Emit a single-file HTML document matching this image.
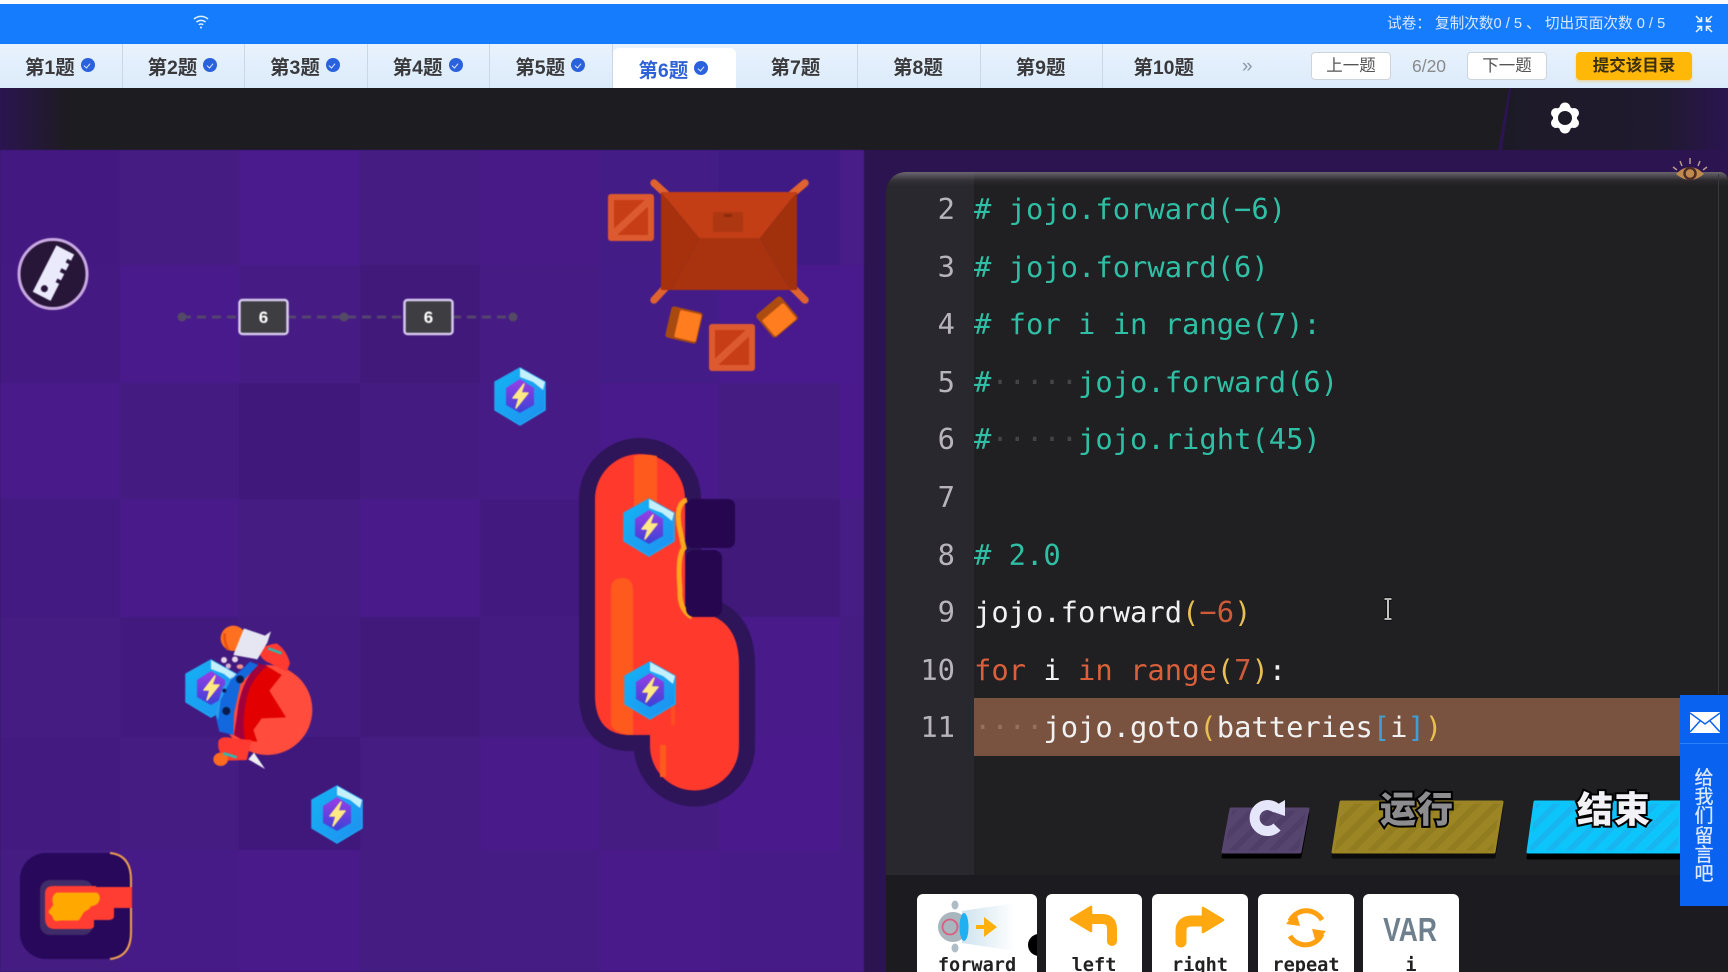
<!DOCTYPE html>
<html lang="zh">
<head>
<meta charset="utf-8">
<title>Code Exam</title>
<style>
html,body{margin:0;padding:0;background:#2b1450;width:1728px;height:972px;overflow:hidden;}
#wrap{position:relative;width:1728px;height:972px;overflow:hidden;font-family:"Liberation Sans","Noto Sans CJK SC",sans-serif;}
.abs{position:absolute;}
#top{left:0;top:0;width:1728px;height:44px;background:#157cfe;border-top:4px solid #f8fafc;box-sizing:border-box;}
#tabs{left:0;top:44px;width:1728px;height:44px;background:linear-gradient(#e8f2fc,#dcebfb);}
.tab{position:absolute;top:0;height:44px;width:122.6px;border-right:1px solid #c9d7e6;box-sizing:border-box;display:flex;align-items:center;justify-content:center;gap:6px;padding-bottom:2px;padding-right:2px;font-size:19.5px;font-weight:700;color:#3a3a3c;}
.tab i{display:block;width:14px;height:14px;border-radius:50%;background:#2a61dc;position:relative;}
.tab i:after{content:"";position:absolute;left:4.5px;top:3.5px;width:3px;height:5px;border:solid #dfe9ff;border-width:0 1.2px 1.2px 0;transform:rotate(40deg);}
.tab.on{top:4px;height:40px;left:613px;background:#fff;border:0;border-radius:6px 6px 0 0;color:#2f62d4;padding-bottom:0;}
.btn{position:absolute;top:8px;height:28px;width:80px;background:#fff;border:1px solid #cfd4da;border-radius:4px;box-sizing:border-box;font-size:16.5px;color:#555;text-align:center;line-height:26px;}
#dark{left:0;top:88px;width:1728px;height:62px;background:#1d1c20;}
#code{left:886px;top:172px;width:842px;height:703px;background:#201f22;border-radius:20px 8px 0 0;overflow:hidden;z-index:0;}
#code:before{content:"";position:absolute;left:0;top:0;right:0;height:14px;background:linear-gradient(rgba(120,114,124,.85),rgba(120,114,124,.12) 60%,rgba(120,114,124,0));z-index:2;}
#gut{left:0;top:0;width:88px;height:703px;background:#2a282f;}
.n{position:absolute;left:886px;width:69px;text-align:right;color:#b7b5bb;}
.l{position:absolute;left:974px;white-space:pre;color:#f1f1f1;}
.n,.l{font-family:"DejaVu Sans Mono","Liberation Mono",monospace;font-size:28.8px;line-height:57.6px;height:57.6px;}
.c{color:#2fbfa4}.k{color:#d9603a}.p{color:#e8c050}.b{color:#3fa0d8}.m{color:#cd5a38}
.d{color:#444348}.dh{color:#96705e}
#hl{left:974px;top:698px;width:706px;height:58px;background:#7a5240;}
#bot{left:886px;top:875px;width:842px;height:97px;background:#1c1b20;}
.card{position:absolute;top:894px;height:78px;background:#fff;border-radius:6px 6px 0 0;text-align:center;font-family:"DejaVu Sans Mono",monospace;font-weight:700;font-size:18.6px;color:#222;overflow:hidden;}
.card span{position:absolute;left:0;right:0;top:61px;line-height:22px;}
#side{left:1680px;top:695px;width:48px;height:211px;background:#0a62f0;}
#side b{position:absolute;left:0;width:48px;top:74px;text-align:center;font-weight:400;font-size:19px;line-height:19.2px;color:#dbe8ff;-webkit-text-stroke:.3px #dbe8ff;}
.bt{position:absolute;font-family:"Liberation Sans","Noto Sans CJK SC",sans-serif;font-weight:900;font-size:36px;line-height:40px;letter-spacing:1px;-webkit-text-stroke:4px #000;paint-order:stroke fill;text-align:center;}
</style>
</head>
<body>
<div id="wrap">
<div id="top" class="abs">
  <svg class="abs" style="left:192px;top:10px" width="18" height="16" viewBox="0 0 18 16" fill="none" stroke="#dff0ff" stroke-width="1.5"><path d="M2 5C6 1.500 12 1.500 16 5M4.500 8C7 5.800 11 5.800 13.500 8M6.800 10.800C8 9.800 10 9.800 11.200 10.800"/><circle cx="9" cy="13.500" r="1" fill="#dff0ff" stroke="none"/></svg>
  <div class="abs" style="left:1387px;top:9px;font-size:14.65px;line-height:22px;color:#dbe9ff;white-space:nowrap">试卷：&nbsp;复制次数0 / 5 、 切出页面次数 0 / 5</div>
  <svg class="abs" style="left:1695px;top:11px" width="18" height="18" viewBox="0 0 18 18" fill="none" stroke="#eaf3ff" stroke-width="1.500"><path d="M1 1L6.500 6.500M6.500 2V6.500H2M17 1L11.500 6.500M11.500 2V6.500H16M1 17L6.500 11.500M6.500 16V11.500H2M17 17L11.500 11.500M11.500 16V11.500H16"/></svg>
</div>
<div id="tabs" class="abs">
  <div class="tab" style="left:0">第1题<i></i></div>
  <div class="tab" style="left:122.600px">第2题<i></i></div>
  <div class="tab" style="left:245.200px">第3题<i></i></div>
  <div class="tab" style="left:367.800px">第4题<i></i></div>
  <div class="tab" style="left:490.400px">第5题<i></i></div>
  <div class="tab on">第6题<i></i></div>
  <div class="tab" style="left:735.600px">第7题</div>
  <div class="tab" style="left:858.200px">第8题</div>
  <div class="tab" style="left:980.800px">第9题</div>
  <div class="tab" style="left:1103.400px;border:0">第10题</div>
  <div class="abs" style="left:1242px;top:11px;font-size:19px;line-height:24px;color:#8d97a3">»</div>
  <div class="btn" style="left:1311px">上一题</div>
  <div class="abs" style="left:1400px;width:58px;top:8px;text-align:center;font-size:17.5px;line-height:28px;color:#8a8a8a">6/20</div>
  <div class="btn" style="left:1467px">下一题</div>
  <div class="btn" style="left:1576px;width:116px;background:#ffb808;border:0;line-height:28px;font-weight:700;color:#3a2f10;box-shadow:0 2px 2px #e8d9a8">提交该目录</div>
</div>
<div id="dark" class="abs"></div>

<svg class="abs" style="left:0;top:88px" width="1728" height="62" viewBox="0 88 1728 62">
  <defs><linearGradient id="gl" x1="0" x2="1"><stop offset="0" stop-color="#2b1450"/><stop offset="1" stop-color="#1d1c20"/></linearGradient>
  <linearGradient id="gr" x1="0" x2="1"><stop offset="0" stop-color="#1d1a28"/><stop offset=".7" stop-color="#1f1a2e"/><stop offset="1" stop-color="#2b1450"/></linearGradient></defs>
  <rect x="0" y="88" width="70" height="62" fill="url(#gl)"/>
  <polygon points="1511,88 1728,88 1728,150 1500,150" fill="url(#gr)"/>
  <polygon points="1509,88 1511,88 1502,150 1498,150" fill="#2b1450"/>
  <g fill="#fff">
    <circle cx="1565" cy="108" r="5.500"/><circle cx="1565" cy="128" r="5.500"/>
    <circle cx="1556" cy="113" r="5"/><circle cx="1574" cy="113" r="5"/>
    <circle cx="1556" cy="123" r="5"/><circle cx="1574" cy="123" r="5"/>
    <circle cx="1565" cy="118" r="12"/>
  </g>
  <circle cx="1565" cy="118" r="7" fill="#1d1a28"/>
</svg>

<!-- GAME -->
<svg class="abs" style="left:0;top:150px;filter:blur(.4px)" width="864" height="822" viewBox="0 150 864 822">
  <defs>
    <linearGradient id="hexin" x1="0" y1="0" x2="0" y2="1"><stop offset="0" stop-color="#9a3ee6"/><stop offset="1" stop-color="#3b42d6"/></linearGradient>
    <linearGradient id="hexo" x1="0" y1="0" x2="1" y2="1"><stop offset="0" stop-color="#14b4f4"/><stop offset="1" stop-color="#1f8ff0"/></linearGradient>
    <g id="bat">
      <polygon points="25,0 50,14 50,42 25,57 0,42 0,14" fill="url(#hexo)" stroke="#1fa8f4" stroke-width="1.500" stroke-linejoin="round"/>
      <polygon points="25,0 50,14 48,22 38,14 25,9" fill="#c4f0fb"/>
      <polygon points="25,11 39,20 39,37 25,45 11,37 11,20" fill="url(#hexin)"/>
      <polygon points="29,16 18,30 24,30 21,40 33,25 26,25" fill="#ffe984" stroke="#ffe984" stroke-width="1.500" stroke-linejoin="round"/>
    </g>
    <g id="crate">
      <rect width="46" height="47" rx="3" fill="#dd5a30"/>
      <rect x="6" y="6" width="34" height="35" fill="#c73d15"/>
      <path d="M3 42L43 5" stroke="#dd5a30" stroke-width="7"/>
    </g>
  </defs>
  <rect x="0" y="150" width="864" height="822" fill="#481a88"/>
  <g>
  <rect x="0" y="150" width="120" height="115" fill="#431880"/><rect x="120" y="150" width="119" height="115" fill="#461d82"/><rect x="239" y="150" width="121" height="115" fill="#4c1b90"/><rect x="360" y="150" width="120" height="115" fill="#461c82"/><rect x="480" y="150" width="120" height="115" fill="#4a1a8a"/><rect x="600" y="150" width="119" height="115" fill="#431d86"/><rect x="719" y="150" width="121" height="115" fill="#3f1a84"/><rect x="840" y="150" width="24" height="115" fill="#4a1e8a"/>
  <rect x="0" y="265" width="120" height="118" fill="#441880"/><rect x="120" y="265" width="119" height="118" fill="#4a1a8e"/><rect x="239" y="265" width="121" height="118" fill="#471c84"/><rect x="360" y="265" width="120" height="118" fill="#401878"/><rect x="480" y="265" width="120" height="118" fill="#471c84"/><rect x="600" y="265" width="119" height="118" fill="#451c8a"/><rect x="719" y="265" width="121" height="118" fill="#4a1a90"/><rect x="840" y="265" width="24" height="118" fill="#4a1a90"/>
  <rect x="0" y="383" width="120" height="116" fill="#4a1a8c"/><rect x="120" y="383" width="119" height="116" fill="#451c80"/><rect x="239" y="383" width="121" height="116" fill="#3f177a"/><rect x="360" y="383" width="120" height="116" fill="#451c80"/><rect x="480" y="383" width="120" height="116" fill="#481b86"/><rect x="600" y="383" width="119" height="116" fill="#4a1a8e"/><rect x="719" y="383" width="121" height="116" fill="#451c82"/><rect x="840" y="383" width="24" height="116" fill="#4c1a90"/>
  <rect x="0" y="499" width="120" height="118" fill="#431a80"/><rect x="120" y="499" width="119" height="118" fill="#4a1a8c"/><rect x="239" y="499" width="121" height="118" fill="#451c82"/><rect x="360" y="499" width="120" height="118" fill="#4a1a8c"/><rect x="480" y="499" width="120" height="118" fill="#421a7e"/><rect x="600" y="499" width="119" height="118" fill="#451c82"/><rect x="719" y="499" width="121" height="118" fill="#401878"/><rect x="840" y="499" width="24" height="118" fill="#471c86"/>
  <rect x="0" y="617" width="120" height="120" fill="#451c82"/><rect x="120" y="617" width="119" height="120" fill="#421a7e"/><rect x="239" y="617" width="121" height="120" fill="#451c80"/><rect x="360" y="617" width="120" height="120" fill="#3f1878"/><rect x="480" y="617" width="120" height="120" fill="#451c80"/><rect x="600" y="617" width="119" height="120" fill="#461c84"/><rect x="719" y="617" width="121" height="120" fill="#4a1a8c"/><rect x="840" y="617" width="24" height="120" fill="#451c82"/>
  <rect x="0" y="737" width="120" height="113" fill="#431a7e"/><rect x="120" y="737" width="119" height="113" fill="#451c82"/><rect x="239" y="737" width="121" height="113" fill="#3f1678"/><rect x="360" y="737" width="120" height="113" fill="#451c82"/><rect x="480" y="737" width="120" height="113" fill="#4a1a8c"/><rect x="600" y="737" width="119" height="113" fill="#451c82"/><rect x="719" y="737" width="121" height="113" fill="#4c1a90"/><rect x="840" y="737" width="24" height="113" fill="#461c84"/>
  <rect x="0" y="850" width="120" height="122" fill="#451c82"/><rect x="120" y="850" width="119" height="122" fill="#471b88"/><rect x="239" y="850" width="121" height="122" fill="#4a1a8c"/><rect x="360" y="850" width="120" height="122" fill="#451c82"/><rect x="480" y="850" width="120" height="122" fill="#461c84"/><rect x="600" y="850" width="119" height="122" fill="#4a1a8c"/><rect x="719" y="850" width="121" height="122" fill="#481b88"/><rect x="840" y="850" width="24" height="122" fill="#471b86"/>
  </g>
  <rect x="0" y="150" width="864" height="822" fill="#451a84" opacity=".25"/>

  <!-- ruler -->
  <ellipse cx="53" cy="274" rx="34" ry="34.500" fill="#281639" stroke="#c9a9e2" stroke-width="3"/>
  <g transform="translate(53 274) rotate(27)" fill="#eaeafc">
    <path d="M-10 -27H10V-20H6V-16H10V-9H5V-5H10V2H6V6H10V25H-10Z"/>
    <circle cx="-1" cy="17" r="3.500" fill="#281639"/>
  </g>

  <!-- measure -->
  <path d="M182 317H513" stroke="#55456e" stroke-width="3" stroke-dasharray="9 6"/>
  <circle cx="182" cy="317" r="4.500" fill="#544a66"/><circle cx="344" cy="317" r="4.500" fill="#544a66"/><circle cx="513" cy="317" r="4.500" fill="#544a66"/>
  <rect x="239.500" y="300" width="48" height="34" rx="3" fill="#3d3d42" stroke="#d6c8ee" stroke-width="2.500"/>
  <rect x="404.500" y="300" width="48" height="34" rx="3" fill="#3d3d42" stroke="#d6c8ee" stroke-width="2.500"/>
  <text x="263.500" y="323" text-anchor="middle" font-family="Liberation Sans" font-weight="700" font-size="17" fill="#fff">6</text>
  <text x="428.500" y="323" text-anchor="middle" font-family="Liberation Sans" font-weight="700" font-size="17" fill="#fff">6</text>

  <!-- building -->
  <g stroke="#e0622e" stroke-width="7.500" stroke-linecap="round">
    <path d="M654 183L666 194M805 183L792 194M654 300L666 287M805 300L792 287"/>
  </g>
  <polygon points="661,192 797,192 760,238 699,238" fill="#c43e15"/>
  <polygon points="661,192 699,238 671,290 661,290" fill="#a6310c"/>
  <polygon points="797,192 760,238 790,290 797,290" fill="#a1300c"/>
  <polygon points="699,238 760,238 790,290 671,290" fill="#a8330e"/>
  <rect x="713" y="212" width="30" height="20" fill="#ad3710"/>
  <rect x="724" y="214" width="8" height="3" fill="#8c2c0c"/>
  <use href="#crate" x="608" y="194"/>
  <use href="#crate" x="709" y="324"/>
  <g transform="translate(684 325) rotate(13)"><rect x="-16" y="-16" width="32" height="32" rx="3" fill="#a84a10"/><rect x="-7" y="-14" width="22" height="28" rx="2" fill="#ff7d1e"/></g>
  <g transform="translate(777 317) rotate(-40)"><rect x="-16" y="-15" width="32" height="30" rx="3" fill="#ac4c10"/><rect x="-14" y="-7" width="28" height="21" rx="2" fill="#ff7d1e"/></g>

  <!-- lava -->
  <path d="M595 499A45 45 0 0 1 685 499V615H710Q739 625 739 665V746A44.500 44.500 0 0 1 650 746V735H630Q595 735 595 695Z" fill="#2e1458" stroke="#2e1458" stroke-width="32" stroke-linejoin="round"/>
  <path d="M595 499A45 45 0 0 1 685 499V615H710Q739 625 739 665V746A44.500 44.500 0 0 1 650 746V735H630Q595 735 595 695Z" fill="#ff3a2c"/>
  <path d="M634 456Q645 453 657 456V520H634Z" fill="#ff5a1e"/>
  <path d="M611 590Q611 578 622 578Q633 578 633 590V735H628Q615 733 611 725Z" fill="#ff5a1e"/>
  <rect x="660" y="745" width="6" height="32" fill="#ff5a1e"/>
  <rect x="671" y="690" width="4" height="35" fill="#ff4c24"/>
  <path d="M687 500Q676 503 679 525 682 540 684 548 677 555 680 590 679 610 692 617" fill="none" stroke="#ffa51e" stroke-width="5"/>
  <rect x="686" y="499" width="49" height="49" rx="7" fill="#25064f"/>
  <rect x="686" y="550" width="36" height="67" rx="8" fill="#25064f"/>

  <!-- batteries -->
  <use href="#bat" x="495" y="368"/>
  <use href="#bat" x="624" y="499"/>
  <use href="#bat" x="625" y="662"/>
  <use href="#bat" x="312" y="786"/>
  <use href="#bat" x="186" y="660"/>

  <!-- robot, coordinates from 3x crop -->
  <g transform="translate(150 600) scale(.3333)">
    <circle cx="352" cy="330" r="135" fill="#ff4c3c"/>
    <polygon points="345,195 395,225 358,272 408,352 335,355 310,390 322,425 275,420 275,340 300,250" fill="#e20000"/>
    <path d="M325 190Q270 250 262 340L252 405 285 425Q272 340 300 262 320 222 352 198Z" fill="#a0003c"/>
    <polygon points="300,185 325,195 272,250 252,340 250,405 208,395 195,340 218,262" fill="#1268dc"/>
    <path d="M218 262L260 215 250 225 212 300 205 360 195 340Z" fill="#2a9cf0"/>
    <circle cx="270" cy="238" r="12" fill="#0a1c4c"/><circle cx="229" cy="333" r="12" fill="#0a1c4c"/><circle cx="223" cy="272" r="6" fill="#0a1c4c"/>
    <circle cx="222" cy="180" r="9" fill="#e8d4e8"/><circle cx="255" cy="178" r="9" fill="#e8d4e8"/><circle cx="235" cy="198" r="8" fill="#d4b0d0"/><ellipse cx="270" cy="200" rx="10" ry="7" fill="#f09090"/>
    <path d="M330 150Q345 135 380 130 410 150 420 190L410 215 350 185Q325 170 330 150Z" fill="#ff3a30"/>
    <path d="M355 145L395 160" stroke="#30b8b0" stroke-width="8"/>
    <circle cx="250" cy="115" r="38" fill="#ff7020"/>
    <path d="M225 100Q220 120 235 150" stroke="#e85010" stroke-width="8" fill="none"/>
    <polygon points="282,85 345,107 363,94 352,128 322,178 250,165" fill="#e6e6f2"/>
    <path d="M205 425Q210 405 250 415L305 420 290 480 235 482Q200 460 205 425Z" fill="#ff3a30"/>
    <ellipse cx="212" cy="478" rx="22" ry="20" fill="#ff6a1e"/>
    <path d="M220 460L260 472" stroke="#30b8b0" stroke-width="8"/>
    <polygon points="295,478 312,458 345,507" fill="#eeeef2"/>
  </g>

  <!-- hand -->
  <rect x="20" y="853" width="112" height="106" rx="26" fill="#27085a"/>
  <path d="M110 853Q131 855 131 880V932Q131 957 110 959" fill="none" stroke="#f0a050" stroke-width="2"/>
  <rect x="40" y="880" width="53" height="55" rx="10" fill="#3f2c68"/>
  <path d="M53 886H96V887H132V908H114V916Q114 920 108 920H94V926Q94 929 88 929H55Q45 929 45 918V894Q45 886 53 886Z" fill="#ff3d33"/>
  <path d="M57 894H96Q99 895 98 900 97 904 90 905L88 908 83 911 78 919H60Q54 921 54 916L50 912 55 905Q52 897 57 894Z" fill="#ffa800" stroke="#ffa800" stroke-width="3" stroke-linejoin="round"/>
</svg>

<!-- right side -->
<div id="code" class="abs"><div id="gut" class="abs"></div></div>
<div class="abs" style="left:1718px;top:174px;width:1px;height:520px;background:#3a383e"></div>
<div id="hl" class="abs"></div>

<div class="n" style="top:181px">2</div>
<div class="n" style="top:238.600px">3</div>
<div class="n" style="top:296.200px">4</div>
<div class="n" style="top:353.800px">5</div>
<div class="n" style="top:411.400px">6</div>
<div class="n" style="top:469px">7</div>
<div class="n" style="top:526.600px">8</div>
<div class="n" style="top:584.200px">9</div>
<div class="n" style="top:641.800px">10</div>
<div class="n" style="top:699.400px">11</div>

<div class="l c" style="top:181px"># jojo.forward(−6)</div>
<div class="l c" style="top:238.600px"># jojo.forward(6)</div>
<div class="l c" style="top:296.200px"># for i in range(7):</div>
<div class="l c" style="top:353.800px">#<span class="d">·····</span>jojo.forward(6)</div>
<div class="l c" style="top:411.400px">#<span class="d">·····</span>jojo.right(45)</div>
<div class="l c" style="top:526.600px"># 2.0</div>
<div class="l" style="top:584.200px">jojo.forward<span class="p">(</span><span class="m">−6</span><span class="p">)</span></div>
<div class="l" style="top:641.800px"><span class="k">for</span> i <span class="k">in</span> <span class="k">range</span><span class="p">(</span><span class="m">7</span><span class="p">)</span>:</div>
<div class="l" style="top:699.400px"><span class="dh">····</span>jojo.goto<span class="p">(</span>batteries<span class="b">[</span>i<span class="b">]</span><span class="p">)</span></div>

<div id="bot" class="abs"></div>

<!-- eye + cursor + action buttons -->
<svg class="abs" style="left:0;top:0;pointer-events:none" width="1728" height="972" viewBox="0 0 1728 972">
  <defs>
    <pattern id="st1" width="14" height="14" patternUnits="userSpaceOnUse" patternTransform="rotate(45)"><rect width="14" height="14" fill="#56456f"/><rect width="6" height="14" fill="#4f3f68"/></pattern>
    <pattern id="st2" width="14" height="14" patternUnits="userSpaceOnUse" patternTransform="rotate(45)"><rect width="14" height="14" fill="#9c8524"/><rect width="6" height="14" fill="#917c20"/></pattern>
    <pattern id="st3" width="14" height="14" patternUnits="userSpaceOnUse" patternTransform="rotate(45)"><rect width="14" height="14" fill="#0cc6fb"/><rect width="6" height="14" fill="#18b6f0"/></pattern>
  </defs>
  <g stroke="#b89a90" stroke-width="1.500"><path d="M1690 158V164M1680 161L1682 166M1700 161L1698 166M1673 167L1677 170M1707 167L1703 170"/></g>
  <path d="M1676 174Q1690 160 1704 174Q1690 186 1676 174Z" fill="#c08a4e"/>
  <circle cx="1690" cy="173.500" r="5.500" fill="none" stroke="#4c2c28" stroke-width="2.500"/>
  <path d="M1384 599H1392M1384 619H1392M1388 600V618" stroke="#111" stroke-width="4" fill="none"/>
  <path d="M1384.500 599H1391.500M1384.500 619H1391.500M1388 600V618" stroke="#eee" stroke-width="1.600" fill="none"/>

  <polygon points="1231,814 1308,814 1300,857 1223,857" fill="#000" stroke="#000" stroke-width="3" stroke-linejoin="round"/>
  <polygon points="1231,809 1308,809 1300,852 1223,852" fill="url(#st1)" stroke="#56456f" stroke-width="3" stroke-linejoin="round"/>
  <polygon points="1341,807 1502,807 1494,857 1333,857" fill="#0c0b0e" stroke="#0c0b0e" stroke-width="3" stroke-linejoin="round"/>
  <polygon points="1341,802 1502,802 1494,852 1333,852" fill="url(#st2)" stroke="#9c8524" stroke-width="3" stroke-linejoin="round"/>
  <polygon points="1535,807 1680,807 1680,858 1528,858" fill="#000" stroke="#000" stroke-width="3" stroke-linejoin="round"/>
  <polygon points="1535,802 1680,802 1680,852 1528,852" fill="url(#st3)" stroke="#0cc6fb" stroke-width="3" stroke-linejoin="round"/>
  <path d="M1277 809A13 13 0 1 0 1277 827" fill="none" stroke="#e6e6fb" stroke-width="10"/>
  <polygon points="1268,810 1285,800 1285,816" fill="#e6e6fb"/>
</svg>
<div class="bt" style="left:1357px;top:790px;width:120px;color:#8d8d90">运行</div>
<div class="bt" style="left:1554px;top:790px;width:120px;color:#f2f2f6">结束</div>

<!-- cards -->
<div class="card" style="left:917px;width:120px"><span>forward</span></div>
<div class="card" style="left:1046px;width:96px"><span>left</span></div>
<div class="card" style="left:1152px;width:96px"><span>right</span></div>
<div class="card" style="left:1258px;width:96px"><span>repeat</span></div>
<div class="card" style="left:1363px;width:96px"><span>i</span></div>
<svg class="abs" style="left:0;top:0" width="1728" height="972" viewBox="0 0 1728 972">
  <defs><linearGradient id="beam" x1="0" x2="1"><stop offset="0" stop-color="#cfe3ee"/><stop offset="1" stop-color="#fff"/></linearGradient>
  <clipPath id="cc"><rect x="917" y="894" width="120" height="78"/></clipPath></defs>
  <polygon points="962,911 1015,903 1015,951 962,943" fill="url(#beam)"/>
  <ellipse cx="955" cy="905" rx="3.500" ry="4.500" fill="#aebcc6"/>
  <ellipse cx="955" cy="948" rx="3.500" ry="4.500" fill="#aebcc6"/>
  <circle cx="953" cy="927" r="15" fill="#aab6be"/>
  <circle cx="950" cy="927" r="7.500" fill="none" stroke="#d85f80" stroke-width="1.800"/>
  <ellipse cx="964" cy="927" rx="4.500" ry="14" fill="#1eb0f0"/>
  <path d="M976 927H987" stroke="#ffb00a" stroke-width="4"/>
  <polygon points="984,917 997,927 984,937" fill="#ffb00a"/>
  <circle cx="1039" cy="945" r="11" fill="#000" clip-path="url(#cc)"/>

  <path d="M1086 919H1102Q1112 919 1112 929V941" fill="none" stroke="#ffa80f" stroke-width="10" stroke-linecap="round"/>
  <polygon points="1071,919 1091,907 1091,931" fill="#ffa80f" stroke="#ffa80f" stroke-width="2.500" stroke-linejoin="round"/>
  <path d="M1208 921H1192Q1181 921 1181 931V942" fill="none" stroke="#ffa80f" stroke-width="11" stroke-linecap="round"/>
  <polygon points="1223,920 1203,908 1203,932" fill="#ffa80f" stroke="#ffa80f" stroke-width="2.500" stroke-linejoin="round"/>
  <path d="M1290 921A18 18 0 0 1 1322 920" fill="none" stroke="#ffa010" stroke-width="5"/>
  <path d="M1322 934A18 18 0 0 1 1290 936" fill="none" stroke="#ffa010" stroke-width="5"/>
  <polygon points="1286,924 1296,912 1300,926" fill="#ffa010"/>
  <polygon points="1326,931 1316,943 1312,929" fill="#ffa010"/>
  <text x="1410" y="941" text-anchor="middle" font-family="Liberation Sans" font-weight="700" font-size="33" fill="#6e808d" transform="translate(1410 929) scale(.8 1) translate(-1410 -929)">VAR</text>
</svg>

<!-- side panel -->
<div id="side" class="abs">
  <svg class="abs" style="left:10px;top:17px" width="30" height="21" viewBox="0 0 30 21"><rect width="30" height="21" fill="#fff"/><path d="M0 1L15 12 30 1M0 20L10 9M30 20L20 9" fill="none" stroke="#0a62f0" stroke-width="1.500"/></svg>
  <div class="abs" style="left:0;top:48px;width:48px;height:1px;background:#2d7ff8"></div>
  <b>给<br>我<br>们<br>留<br>言<br>吧</b>
</div>
</div>
</body>
</html>
